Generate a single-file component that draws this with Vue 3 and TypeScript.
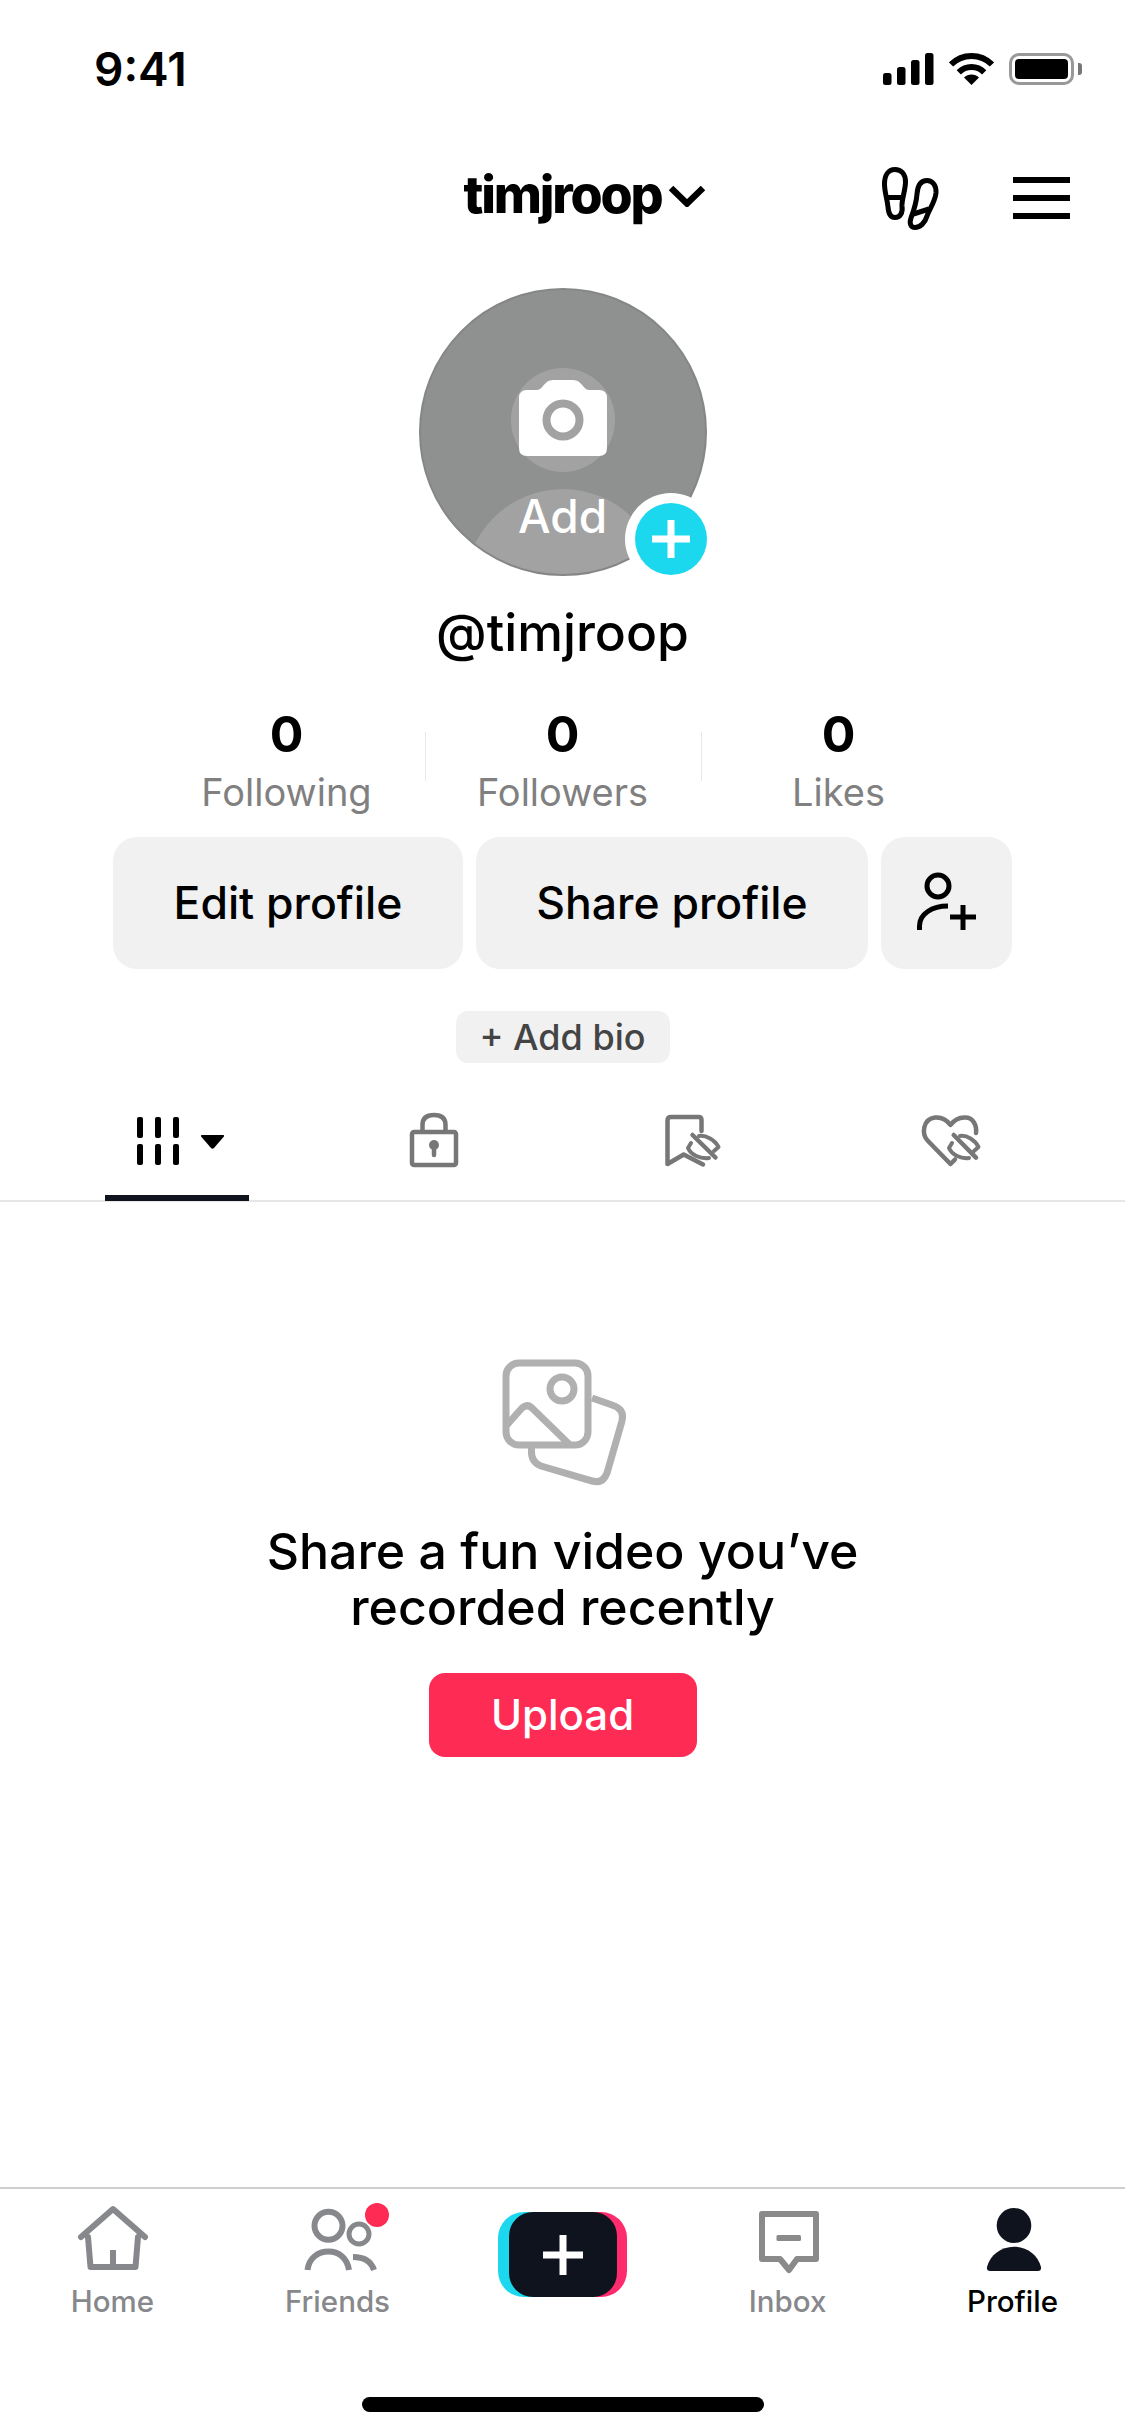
<template>
  <div class="page">
    <!-- Status bar -->
    <div class="status-bar">
      <span class="clock">9:41</span>
      <div class="status-icons">
        <svg width="51" height="32" viewBox="0 0 51 32" fill="#000">
          <rect x="0" y="20" width="8.5" height="12" rx="2.5" />
          <rect x="14" y="14" width="8.5" height="18" rx="2.5" />
          <rect x="28" y="7" width="8.5" height="25" rx="2.5" />
          <rect x="42" y="0" width="8.5" height="32" rx="2.5" />
        </svg>
        <svg width="45" height="32" viewBox="0 0 45 32" fill="none" stroke="#000" stroke-width="6">
          <path d="M2 11.5A29 29 0 0 1 43 11.5" />
          <path d="M9.8 19.3A18 18 0 0 1 35.2 19.3" />
          <path d="M22.5 32L15 24.5A10.6 10.6 0 0 1 30 24.5Z" fill="#000" stroke="none" />
        </svg>
        <div class="battery">
          <div class="battery-body"><div class="battery-level"></div></div>
          <div class="battery-nub"></div>
        </div>
      </div>
    </div>

    <!-- Top nav -->
    <div class="top-nav">
      <div></div>
      <div class="username">timjroop</div>
      <div class="nav-right">
        <svg class="chevron" width="36" height="22" viewBox="0 0 36 22" fill="none" stroke="#000" stroke-width="6.5">
          <path d="M2 3L18 18.5L34 3" />
        </svg>
        <svg class="feet" width="80" height="75" viewBox="0 0 80 75" fill="none" stroke="#000" stroke-width="5">
          <path d="M25 9.5C18 9.5 14.5 16 14.5 24C14.5 32 17 38 18 47C18.5 54 21 57.5 25 57.5C30 57.5 33 53 32 46C31.5 40 35.5 30 35.5 22C35.5 14 31 9.5 25 9.5Z" />
          <path d="M17.5 37.5H32" />
          <path d="M57 20.5C50 20.5 47.5 27 47 34C46.5 41 44 50 41 58C39 64 41 67.5 45 67.5C50 67.5 55 63 57 56C59 50 65 42 66 33C66.5 26 63 20.5 57 20.5Z" />
          <path d="M43.5 54L59 49" />
        </svg>
        <div class="menu">
          <span></span>
          <span></span>
          <span></span>
        </div>
      </div>
    </div>

    <!-- Avatar -->
    <div class="avatar-wrap">
      <div class="avatar">
        <div class="camera-disc"></div>
        <svg class="camera" width="88" height="76" viewBox="0 0 88 76">
          <path fill="#fff" d="M8 10H18C24 10 25 0 34 0H54C63 0 64 10 70 10H80Q88 10 88 18V68Q88 76 80 76H8Q0 76 0 68V18Q0 10 8 10Z" />
          <circle cx="44" cy="40" r="16.5" fill="#fff" stroke="#a2a2a2" stroke-width="8" />
        </svg>
        <div class="add-dome"></div>
        <div class="add-text">Add</div>
      </div>
      <div class="add-badge">
        <div class="add-badge-inner">
          <svg width="38" height="38" viewBox="0 0 38 38" stroke="#fff" stroke-width="7">
            <path d="M0 19H38M19 0V38" />
          </svg>
        </div>
      </div>
    </div>

    <div class="handle">@timjroop</div>

    <!-- Stats -->
    <div class="stats">
      <div v-for="stat in stats" :key="stat.label" class="stat">
        <div class="stat-value">{{ stat.value }}</div>
        <div class="stat-label">{{ stat.label }}</div>
      </div>
    </div>

    <!-- Actions -->
    <div class="actions">
      <button class="action edit">Edit profile</button>
      <button class="action share">Share profile</button>
      <button class="action friend">
        <svg width="66" height="66" viewBox="0 0 66 66" fill="none" stroke="#000" stroke-width="5">
          <circle cx="24" cy="16" r="11" />
          <path d="M5.5 60V56C5.5 44 18 36 34 36" />
          <path d="M36 47H62M49 35V60" />
        </svg>
      </button>
    </div>

    <div class="bio-row">
      <button class="bio">+ Add bio</button>
    </div>

    <!-- Content tabs -->
    <div class="content-tabs">
      <div class="content-tab active">
        <svg width="88" height="50" viewBox="0 0 88 50" fill="#000">
          <rect x="1" y="1" width="6" height="21" rx="2" />
          <rect x="19" y="1" width="6" height="21" rx="2" />
          <rect x="37" y="1" width="6" height="21" rx="2" />
          <rect x="1" y="28" width="6" height="21" rx="2" />
          <rect x="19" y="28" width="6" height="21" rx="2" />
          <rect x="37" y="28" width="6" height="21" rx="2" />
          <path d="M66 19H87Q89 19 87.5 21L78 32Q76.5 33.5 75 32L65.5 21Q64 19 66 19Z" />
        </svg>
      </div>
      <div class="content-tab lock">
        <svg width="50" height="56" viewBox="0 0 50 56" fill="none" stroke="#777" stroke-width="4.5" stroke-linejoin="round">
          <rect x="3" y="20" width="44" height="33" rx="2" />
          <path d="M13.5 20V13C13.5 6 18 3 25 3C32 3 36.5 6 36.5 13V20" />
          <circle cx="25" cy="33" r="5" fill="#777" stroke="none" />
          <path d="M25 34V43" stroke-linecap="round" stroke-width="4.5" />
        </svg>
      </div>
      <div class="content-tab">
        <svg width="80" height="70" viewBox="0 0 80 70" fill="none" stroke="#777" stroke-width="4.5" stroke-linecap="round" stroke-linejoin="round">
          <path d="M48.5 26V15Q48.5 12 45.5 12H18Q14.5 12 14.5 15.5V59L30.7 49.5L50 59.5" />
          <path d="M39.5 30L62.5 52.5" />
          <g stroke-width="4">
            <path d="M46 31C53 30 62 35 65.5 42L61 46" />
            <path d="M38 38L35 43C38 50 47 54 56 53" />
          </g>
        </svg>
      </div>
      <div class="content-tab">
        <svg width="80" height="70" viewBox="0 0 80 70" fill="none" stroke="#777" stroke-width="4.5" stroke-linecap="round" stroke-linejoin="round">
          <path d="M44 54.5L39.5 59L17 36C10 29 12 14 24 12.5C30 12 36 15 39.5 20C43 15 49 12 55 12.5C62 13 66 20 65 28" />
          <path d="M42.7 30L65 52.7" />
          <g stroke-width="4">
            <path d="M49 31C56 30 64 35 67.5 42L63 46" />
            <path d="M41 38L38 43C41 50 50 54 58 53" />
          </g>
        </svg>
      </div>
    </div>

    <!-- Empty state -->
    <div class="empty">
      <svg class="empty-icon" width="140" height="140" viewBox="0 0 140 140" fill="none" stroke="#b0b0b0" stroke-width="7" stroke-linejoin="round">
        <rect x="12" y="12" width="82" height="82" rx="13" />
        <circle cx="68" cy="38" r="12" />
        <path d="M12 75L28 57Q34 52 39 58L76 94" />
        <path d="M98 47L118 54Q131 58 128 70L113 122Q109 133 98 130L47 115Q37 111 37.5 100V94" />
      </svg>
      <div class="empty-title">Share a fun video you’ve<br />recorded recently</div>
      <button class="upload">Upload</button>
    </div>

    <!-- Bottom tabs -->
    <div class="tab-bar">
      <div class="tab">
        <svg width="80" height="70" viewBox="0 0 80 70" fill="none" stroke="#87888c" stroke-width="6" stroke-linecap="round" stroke-linejoin="round">
          <path d="M8 33L40 5L72 33" />
          <path d="M15 33L17.5 63H62.5L65 33" />
          <path d="M40 46V63" stroke-linecap="butt" />
        </svg>
        <span class="tab-label">Home</span>
      </div>
      <div class="tab">
        <svg width="80" height="70" viewBox="0 0 80 70" fill="none" stroke="#87888c" stroke-width="6" class="friends-icon">
          <circle cx="30.5" cy="21.7" r="14" />
          <circle cx="61" cy="30" r="10" stroke-width="5" />
          <path d="M9.5 66C11 54 20 47.5 30.5 47.5C41 47.5 49 54 51 66" />
          <path d="M55 53C65 53 73 57 76 66" />
        </svg>
        <span class="dot"></span>
        <span class="tab-label">Friends</span>
      </div>
      <div class="tab">
        <div class="create">
          <div class="create-inner">
            <svg width="40" height="40" viewBox="0 0 40 40" stroke="#fff" stroke-width="7">
              <path d="M0 20H40M20 0V40" />
            </svg>
          </div>
        </div>
      </div>
      <div class="tab">
        <svg width="80" height="70" viewBox="0 0 80 70" fill="none" stroke="#8a8a8a" stroke-width="6" stroke-linejoin="round">
          <path d="M14 10H68V55H49L41 66L32 55H14Z" />
          <rect x="28.5" y="31" width="24.5" height="6" rx="1.5" fill="#8a8a8a" stroke="none" />
        </svg>
        <span class="tab-label">Inbox</span>
      </div>
      <div class="tab current">
        <svg width="80" height="70" viewBox="0 0 80 70" fill="#0f131d">
          <ellipse cx="41" cy="21.5" rx="17.3" ry="17.5" />
          <path d="M14 63C17 51 28 42.7 41 42.7C54 42.7 65 51 68 63Q68.5 67 65 67H17Q13.5 67 14 63Z" />
        </svg>
        <span class="tab-label">Profile</span>
      </div>
    </div>

    <div class="home-bar"></div>
  </div>
</template>

<script setup lang="ts">
interface Stat {
  value: number;
  label: string;
}

const stats: Stat[] = [
  { value: 0, label: "Following" },
  { value: 0, label: "Followers" },
  { value: 0, label: "Likes" },
];
</script>

<style scoped>
.page {
  width: 1125px;
  height: 2436px;
  background: #fff;
  display: flex;
  flex-direction: column;
  font-family: Inter, "Liberation Sans", sans-serif;
  color: #000;
  overflow: hidden;
}

button {
  border: none;
  font-family: inherit;
  padding: 0;
}

.status-bar {
  height: 138px;
  display: flex;
  align-items: center;
  justify-content: space-between;
  padding: 0 43px 0 94px;
}

.clock {
  font-size: 46px;
  font-weight: 600;
}

.status-icons {
  display: flex;
  align-items: center;
  gap: 15px;
}

.battery {
  display: flex;
  align-items: center;
  gap: 4px;
}

.battery-body {
  width: 65px;
  height: 32px;
  box-sizing: border-box;
  border: 3px solid #999;
  border-radius: 10px;
  padding: 3px;
}

.battery-level {
  height: 100%;
  background: #000;
  border-radius: 4px;
}

.battery-nub {
  width: 4px;
  height: 12px;
  background: #777;
  border-radius: 0 3px 3px 0;
}

.top-nav {
  height: 120px;
  display: grid;
  grid-template-columns: 1fr auto 1fr;
  align-items: center;
}

.username {
  font-size: 52px;
  line-height: 58px;
  font-weight: 800;
  letter-spacing: -2.2px;
  margin-top: -7px;
}

.nav-right {
  display: flex;
  align-items: center;
  padding-right: 55px;
}

.chevron {
  margin-left: 8px;
  margin-top: -5px;
}

.feet {
  margin-left: auto;
  margin-right: 63px;
  margin-top: -2px;
}

.menu {
  display: flex;
  flex-direction: column;
  gap: 12px;
}

.menu span {
  display: block;
  width: 57px;
  height: 6px;
  background: #000;
}

.avatar-wrap {
  position: relative;
  width: 288px;
  height: 288px;
  margin: 30px auto 0;
}

.avatar {
  position: relative;
  width: 100%;
  height: 100%;
  box-sizing: border-box;
  border: 2px solid #858686;
  border-radius: 50%;
  background: #8f9090;
  overflow: hidden;
}

.camera-disc {
  position: absolute;
  left: 90px;
  top: 78px;
  width: 104px;
  height: 104px;
  border-radius: 50%;
  background: #a2a2a2;
}

.camera {
  position: absolute;
  left: 98px;
  top: 90px;
}

.add-dome {
  position: absolute;
  left: 44px;
  top: 199px;
  width: 196px;
  height: 196px;
  border-radius: 50%;
  background: #a2a2a2;
}

.add-text {
  position: absolute;
  left: 0;
  right: 0;
  top: 200px;
  text-align: center;
  font-size: 46px;
  line-height: 52px;
  font-weight: 500;
  color: #fff;
}

.add-badge {
  position: absolute;
  left: 206px;
  top: 205px;
  width: 92px;
  height: 92px;
  border-radius: 50%;
  background: #fff;
  display: flex;
  align-items: center;
  justify-content: center;
}

.add-badge-inner {
  width: 72px;
  height: 72px;
  border-radius: 50%;
  background: #1cd8ee;
  display: flex;
  align-items: center;
  justify-content: center;
}

.handle {
  margin-top: 27px;
  text-align: center;
  font-size: 51.5px;
  line-height: 58px;
  font-weight: 500;
}

.stats {
  margin-top: 48px;
  display: flex;
  justify-content: center;
}

.stat {
  position: relative;
  width: 276px;
  text-align: center;
}

.stat + .stat::before {
  content: "";
  position: absolute;
  left: 0;
  top: 23px;
  height: 49px;
  width: 1.5px;
  background: #e8e8e8;
}

.stat-value {
  font-size: 50px;
  line-height: 50px;
  font-weight: 700;
}

.stat-label {
  margin-top: 9px;
  font-size: 38px;
  line-height: 48px;
  color: #808080;
}

.actions {
  margin-top: 21px;
  padding-left: 113px;
  display: flex;
  gap: 13px;
}

.action {
  height: 132px;
  border-radius: 24px;
  background: #f1f1f2;
  color: #000;
  font-size: 44.5px;
  font-weight: 500;
  display: flex;
  align-items: center;
  justify-content: center;
}

.edit {
  width: 350px;
}

.share {
  width: 392px;
}

.friend {
  width: 131px;
}

.bio-row {
  margin-top: 42px;
  display: flex;
  justify-content: center;
}

.bio {
  width: 214px;
  height: 52px;
  border-radius: 12px;
  background: #f1f1f2;
  color: #444;
  font-size: 36px;
  font-weight: 500;
}

.content-tabs {
  margin-top: 28px;
  height: 111px;
  box-sizing: border-box;
  padding: 0 45px 0 48px;
  border-bottom: 2px solid #e6e6e6;
  display: grid;
  grid-template-columns: repeat(4, 258px);
}

.content-tab {
  position: relative;
  display: flex;
  align-items: center;
  justify-content: center;
  padding-bottom: 12px;
}

.content-tab.active {
  padding-left: 6px;
  padding-bottom: 10px;
}

.content-tab.lock {
  padding-right: 2px;
}

.content-tab.active::after {
  content: "";
  position: absolute;
  left: 57px;
  bottom: -1px;
  width: 144px;
  height: 6px;
  background: #0f131d;
}

.empty {
  flex: 1;
  padding-top: 149px;
  display: flex;
  flex-direction: column;
  align-items: center;
}

.empty-icon {
  margin-left: 3px;
}

.empty-title {
  margin-top: 32px;
  text-align: center;
  font-size: 50px;
  line-height: 56px;
  font-weight: 500;
}

.upload {
  margin-top: 38px;
  width: 268px;
  height: 84px;
  border-radius: 16px;
  background: #fe2c55;
  color: #fff;
  font-size: 42px;
  font-weight: 500;
  padding-bottom: 2px;
}

.tab-bar {
  border-top: 2px solid #cfcfcf;
  height: 210px;
  box-sizing: border-box;
  padding-top: 15px;
  display: grid;
  grid-template-columns: repeat(5, 225px);
}

.tab {
  position: relative;
  display: flex;
  flex-direction: column;
  align-items: center;
}

.tab-label {
  margin-top: 9px;
  font-size: 29.5px;
  line-height: 36px;
  font-weight: 500;
  color: #87888c;
}

.current .tab-label {
  color: #000;
}

.dot {
  position: absolute;
  left: 140px;
  top: -1px;
  width: 24px;
  height: 24px;
  border-radius: 50%;
  background: #fe2c55;
}

.create {
  margin-top: 8px;
  width: 129px;
  height: 85px;
  border-radius: 26px;
  background: linear-gradient(90deg, #1cd8ee 50%, #fe2c6c 50%);
  display: flex;
  padding-left: 11px;
  box-sizing: border-box;
}

.create-inner {
  width: 108px;
  height: 85px;
  border-radius: 24px;
  background: #0f131d;
  display: flex;
  align-items: center;
  justify-content: center;
}

.home-bar {
  flex-shrink: 0;
  width: 402px;
  height: 15px;
  margin: 0 0 24px 362px;
  border-radius: 8px;
  background: #000;
}
</style>

<style>
html,
body {
  margin: 0;
  background: #fff;
}
</style>
